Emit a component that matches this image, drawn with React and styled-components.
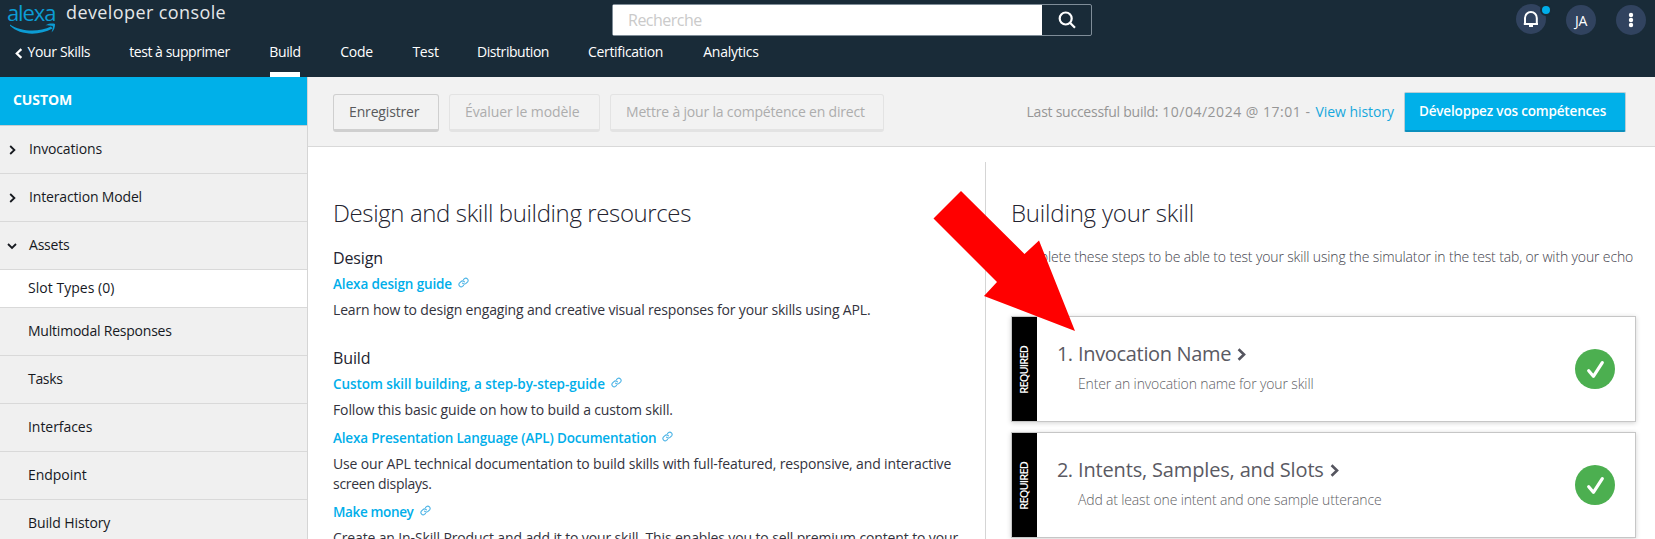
import React from "react";
import styled, { createGlobalStyle } from "styled-components";

const Global = createGlobalStyle`
  * { box-sizing: border-box; }
  body { margin: 0; overflow: hidden; background: #fff; font-family: "Open Sans", "Noto Sans", sans-serif; font-size: 14px; color: #16191f; }
  h2, h3, p { margin: 0; font-weight: 400; }
  a { text-decoration: none; }
`;

const Page = styled.div`
  position: relative;
  height: 539px;
  overflow: hidden;
  display: flex;
  flex-direction: column;
`;

/* Letter-spaced inline text */
const Text = styled.span`
  letter-spacing: ${(p) => p.$track || 0}px;
  white-space: nowrap;
`;

/* Header */
const Header = styled.header`
  flex: none;
  height: 77px;
  background: #192b38;
  color: #fff;
`;
const TopRow = styled.div`
  display: grid;
  grid-template-columns: 605px 480px 1fr;
  height: 40px;
  padding-left: 7px;
`;
const Brand = styled.div`
  display: flex;
`;
const Logo = styled.div`
  width: 52px;
  height: 36px;
  color: #0c9cd4;
  font-size: 22px;
  line-height: 24px;
  letter-spacing: -1.1px;
  display: flex;
  flex-direction: column;
  svg { display: block; flex: none; margin: -1px 0 0 1px; }
`;
const Console = styled.div`
  padding-left: 7px;
  font-size: 18px;
  line-height: 25px;
  letter-spacing: 0.4px;
  color: #e4e7e9;
`;
const Search = styled.div`
  display: flex;
  height: 32px;
  margin-top: 4px;
  border: 1px solid #7f8d98;
  border-radius: 2px;
`;
const SearchInput = styled.div`
  width: 429px;
  padding-left: 15px;
  background: #fff;
  color: #cacaca;
  font-size: 16px;
  line-height: 31px;
  letter-spacing: -0.5px;
`;
const SearchButton = styled.div`
  flex: 1;
  display: flex;
  align-items: center;
  justify-content: center;
`;
const Actions = styled.div`
  display: flex;
  justify-content: flex-end;
  gap: 20px;
  padding: 5px 9px 0 0;
`;
const Round = styled.div`
  position: relative;
  top: ${(p) => (p.$raised ? -1 : 0)}px;
  width: 30px;
  height: 30px;
  border-radius: 50%;
  background: #31435f;
  display: flex;
  align-items: center;
  justify-content: center;
  font-size: 14px;
  letter-spacing: -0.2px;
`;
const Dot = styled.i`
  position: absolute;
  left: 24px;
  top: 0;
  width: 12px;
  height: 12px;
  border: 2px solid #192b38;
  border-radius: 50%;
  background: #00aeea;
`;
const Nav = styled.nav`
  display: flex;
  gap: 40px;
  height: 37px;
  padding-left: 16px;
`;
const NavLink = styled.a`
  display: flex;
  justify-content: center;
  align-items: flex-start;
  width: ${(p) => p.$w}px;
  line-height: 24px;
  letter-spacing: ${(p) => p.$track}px;
  white-space: nowrap;
  border-bottom: 5px solid ${(p) => (p.$on ? "#fff" : "transparent")};
  svg { flex: none; margin: 8px 5px 0 0; }
`;

/* Body */
const Body = styled.div`
  flex: 1;
  min-height: 0;
  display: flex;
`;
const Sidebar = styled.aside`
  flex: none;
  width: 308px;
  border-right: 1px solid #d5d5d5;
  background: #f0f0f0;
`;
const SideTitle = styled.div`
  height: 49px;
  padding-left: 13px;
  border-bottom: 1px solid #c8cdd0;
  background: #00b0e9;
  color: #fff;
  font-weight: 700;
  line-height: 46px;
`;
const SideItem = styled.div`
  display: flex;
  height: ${(p) => (p.$sub ? 38 : 48)}px;
  line-height: ${(p) => (p.$sub ? 36 : 46)}px;
  border-bottom: 1px solid #d9d9d9;
  background: ${(p) => (p.$sub ? "#fff" : "transparent")};
`;
const Caret = styled.span`
  display: flex;
  align-items: center;
  justify-content: center;
  width: ${(p) => (p.$wide ? 29 : 28)}px;
  padding: 1px 5px 0 0;
`;
const Main = styled.main`
  flex: 1;
  min-width: 0;
  display: flex;
  flex-direction: column;
`;
const Toolbar = styled.div`
  flex: none;
  display: flex;
  gap: 10px;
  height: 70px;
  padding: 17px 29px 0 25px;
  background: #f2f2f2;
  border-bottom: 1px solid #d9d9d9;
`;
const Button = styled.div`
  width: ${(p) => p.$w}px;
  height: 38px;
  padding-left: 15px;
  border: 1px solid ${(p) => (p.$off ? "#e3e3e3" : "#cfcfcf")};
  border-bottom-width: 3px;
  border-radius: 3px;
  color: ${(p) => (p.$off ? "#adadad" : "#58595b")};
  line-height: 34px;
`;
const Status = styled.div`
  display: flex;
  gap: 4px;
  margin-left: auto;
  line-height: 36px;
  color: #969696;
`;
const History = styled.a`
  color: #16a8dd;
  line-height: 35px;
  margin-left: 1px;
`;
const Primary = styled.div`
  width: 222px;
  height: 40px;
  margin-top: -2px;
  padding-left: 14px;
  border: 1px solid #b9cdd5;
  border-bottom: 2px solid #0a8fbd;
  border-radius: 2px;
  background: #00b0e9;
  color: #fff;
  font-size: 13.5px;
  font-weight: 600;
  line-height: 37px;
`;
const Columns = styled.div`
  flex: 1;
  min-height: 0;
  display: flex;
  padding: 15px 19px 0 25px;
  background: #fff;
`;
const Resources = styled.section`
  width: 652px;
`;
const Steps = styled.section`
  flex: 1;
  border-left: 1px solid #d5d5d5;
  padding-left: 25px;
`;
const Title = styled.h2`
  padding-top: 34px;
  font-size: 24px;
  font-weight: 300;
  line-height: 34px;
  color: #232330;
`;
const Group = styled.h3`
  margin-top: ${(p) => p.$top}px;
  font-size: 16px;
  line-height: 24px;
  color: #232330;
`;
const Guide = styled.a`
  display: flex;
  gap: 6px;
  padding-top: ${(p) => p.$top}px;
  color: #00aeea;
  font-size: 13.5px;
  font-weight: 600;
  line-height: 26px;
  svg { margin-top: 6px; }
`;
const Para = styled.p`
  line-height: 20px;
  padding: 3px 0;
  color: #33333d;
`;
const Intro = styled.p`
  margin: 15px 0 47px;
  font-weight: 300;
  line-height: 24px;
  color: #43434d;
`;
const Card = styled.div`
  display: flex;
  height: 106px;
  margin-bottom: 10px;
  border: 1px solid #c6c6c6;
  box-shadow: 0 1px 5px rgba(0, 0, 0, 0.18);
  background: #fff;
`;
const Required = styled.div`
  width: 25px;
  display: flex;
  align-items: center;
  justify-content: center;
  padding: 2px 2px 0 0;
  background: #000;
  color: #fff;
  span {
    writing-mode: vertical-rl;
    transform: rotate(180deg);
    font-size: 11px;
    font-weight: 600;
    letter-spacing: -0.85px;
  }
`;
const CardBody = styled.div`
  flex: 1;
  display: grid;
  grid-template-columns: 21px 1fr;
  grid-template-rows: 30px 30px;
  padding: 22px 0 0 20px;
  color: #5a5a63;
`;
const CardTitle = styled.div`
  display: flex;
  gap: 6px;
  font-size: 20px;
  line-height: 30px;
  svg { margin-top: 9px; }
`;
const CardText = styled.p`
  grid-column: 2;
  font-weight: 300;
  line-height: 30px;
  color: #5f5f66;
`;
const Check = styled.div`
  width: 40px;
  height: 40px;
  margin: 32px 20px 0 0;
  border-radius: 50%;
  background: #4caf50;
`;
const Arrow = styled.svg`
  position: absolute;
  left: 933px;
  top: 190px;
`;

const Chevron = ({ s = 10, w = 2, dir = "right", color = "#16191f" }) => (
  <svg width={s * (dir === "down" ? 1 : 0.7)} height={s} viewBox={dir === "down" ? "0 0 10 10" : "0 0 7 10"} fill="none" stroke={color} strokeWidth={w}>
    <path d={{ right: "M1.2 1 5.4 5 1.2 9", left: "M5.8 1 1.6 5l4.2 4", down: "M1 3 5 7l4-4" }[dir]} />
  </svg>
);

const LinkIcon = () => (
  <svg width="11" height="11" viewBox="0 0 24 24" fill="none" stroke="#4db4e6" strokeWidth="2.4" strokeLinecap="round">
    <path d="M10 13.500a5 5 0 0 0 7.500.5l3.500-3.500a5 5 0 0 0-7-7L12 5.500" />
    <path d="M14 10.500a5 5 0 0 0-7.500-.5L3 13.500a5 5 0 0 0 7 7l2-2" />
  </svg>
);

const NAV = [
  ["test à supprimer", 101, -0.45],
  ["Build", 30, -0.36, true],
  ["Code", 33, -0.3],
  ["Test", 25, -0.25],
  ["Distribution", 70, -0.44],
  ["Certification", 75, -0.32],
  ["Analytics", 56, -0.24],
];

const SIDE = [
  ["Invocations", -0.15, "right"],
  ["Interaction Model", -0.16, "right"],
  ["Assets", -0.2, "down"],
  ["Slot Types (0)", 0.03, null, true],
  ["Multimodal Responses", -0.22],
  ["Tasks", -0.33],
  ["Interfaces", -0.05],
  ["Endpoint", -0.05],
  ["Build History", -0.1],
];

const Resource = ({ title, track, top = 2, children }) => (
  <>
    <Guide $top={top}>
      <Text $track={track}>{title}</Text>
      <LinkIcon />
    </Guide>
    <Para>{children}</Para>
  </>
);

const Step = ({ n, title, track, text, textTrack }) => (
  <Card>
    <Required><span>REQUIRED</span></Required>
    <CardBody>
      <CardTitle><Text $track={-0.8}>{n}.</Text></CardTitle>
      <CardTitle>
        <Text $track={track}>{title}</Text>
        <Chevron s={13} w={2} color="#55555f" />
      </CardTitle>
      <CardText><Text $track={textTrack}>{text}</Text></CardText>
    </CardBody>
    <Check>
      <svg width="40" height="40" viewBox="0 0 40 40" fill="none" stroke="#fff" strokeWidth="3.2" strokeLinecap="round" strokeLinejoin="round">
        <path d="M13.700 21.800 18.400 27.300 27.300 13.700" />
      </svg>
    </Check>
  </Card>
);

export default function App() {
  return (
    <Page>
      <Global />
      <Header>
        <TopRow>
          <Brand>
            <Logo>
              alexa
              <svg width="50" height="12" viewBox="0 0 50 12" fill="#0c9cd4">
                <path d="M2 1.500C13 9 31 9.500 43 3.500L44.500 5.500C31 13 12 12.500 2 2.800Z" />
                <path d="M37.500 2.200C41 .2 45 .3 47 1 47.200 4 46 7.500 43.500 9.500 44.500 6.500 45.200 4.500 44.700 3 43 2.400 40 2.600 37.500 2.200Z" />
              </svg>
            </Logo>
            <Console>developer console</Console>
          </Brand>
          <Search>
            <SearchInput>Recherche</SearchInput>
            <SearchButton>
              <svg width="18" height="18" viewBox="0 0 18 18" fill="none" stroke="#fff" strokeWidth="2.200">
                <circle cx="7.700" cy="7.500" r="6" />
                <path d="M12 11.800 17 16.800" />
              </svg>
            </SearchButton>
          </Search>
          <Actions>
            <Round $raised>
              <svg width="16" height="18" viewBox="0 0 16 18" fill="none" stroke="#fff" strokeWidth="2">
                <path d="M2 14V8a5.900 5.900 0 0 1 11.800 0v6ZM.8 14h14.200" />
                <path d="M6 16h4" />
              </svg>
              <Dot />
            </Round>
            <Round>JA</Round>
            <Round>
              <svg width="6" height="16" viewBox="0 0 6 16" fill="#fff">
                <circle cx="3" cy="3" r="2.200" />
                <circle cx="3" cy="8" r="2.200" />
                <circle cx="3" cy="13" r="2.200" />
              </svg>
            </Round>
          </Actions>
        </TopRow>
        <Nav>
          <NavLink $w={73} $track={-0.35}>
            <Chevron dir="left" s={11} w={2} color="#fff" />
            Your Skills
          </NavLink>
          {NAV.map(([t, w, track, on]) => (
            <NavLink key={t} $w={w} $track={track} $on={on}>{t}</NavLink>
          ))}
        </Nav>
      </Header>
      <Body>
        <Sidebar>
          <SideTitle><Text $track={-0.1}>CUSTOM</Text></SideTitle>
          {SIDE.map(([t, track, dir, sub]) => (
            <SideItem key={t} $sub={sub}>
              <Caret $wide={!!dir}>{dir && <Chevron dir={dir} w={1.8} />}</Caret>
              <Text $track={track}>{t}</Text>
            </SideItem>
          ))}
        </Sidebar>
        <Main>
          <Toolbar>
            <Button $w={106}><Text $track={-0.15}>Enregistrer</Text></Button>
            <Button $w={151} $off><Text $track={-0.1}>Évaluer le modèle</Text></Button>
            <Button $w={274} $off><Text $track={-0.18}>Mettre à jour la compétence en direct</Text></Button>
            <Status>
              <Text $track={-0.25}>Last successful build:</Text>
              <Text $track={0.51}>10/04/2024 @ 17:01 -</Text>
              <History><Text $track={-0.05}>View history</Text></History>
            </Status>
            <Primary><Text $track={-0.17}>Développez vos compétences</Text></Primary>
          </Toolbar>
          <Columns>
            <Resources>
              <Title><Text $track={-0.38}>Design and skill building resources</Text></Title>
              <Group $top={16}><Text $track={-0.13}>Design</Text></Group>
              <Resource title="Alexa design guide" track={-0.13} top={1}>
                <Text $track={-0.165}>Learn how to design engaging and creative visual responses for your skills using APL.</Text>
              </Resource>
              <Group $top={23}><Text $track={-0.13}>Build</Text></Group>
              <Resource title="Custom skill building, a step-by-step-guide" track={-0.07} top={1}>
                <Text $track={-0.13}>Follow this basic guide on how to build a custom skill.</Text>
              </Resource>
              <Resource title="Alexa Presentation Language (APL) Documentation" track={-0.17}>
                <Text $track={-0.14}>Use our APL technical documentation to build skills with full-featured, responsive, and interactive</Text>
                <br />
                <Text $track={-0.28}>screen displays.</Text>
              </Resource>
              <Resource title="Make money" track={-0.35}>
                <Text $track={-0.135}>Create an In-Skill Product and add it to your skill. This enables you to sell premium content to your</Text>
              </Resource>
            </Resources>
            <Steps>
              <Title><Text $track={-0.19}>Building your skill</Text></Title>
              <Intro><Text $track={-0.14}>Complete these steps to be able to test your skill using the simulator in the test tab, or with your echo</Text></Intro>
              <Step n={1} title="Invocation Name" track={-0.33} text="Enter an invocation name for your skill" textTrack={-0.13} />
              <Step n={2} title="Intents, Samples, and Slots" track={-0.16} text="Add at least one intent and one sample utterance" textTrack={-0.16} />
            </Steps>
          </Columns>
        </Main>
      </Body>
      <Arrow width="144" height="144" viewBox="933 190 144 144">
        <path fill="#f00" d="M961 191 1024.500 254 1039 240.500 1075 331 984 296 997 282 933.500 218.500Z" />
      </Arrow>
    </Page>
  );
}
